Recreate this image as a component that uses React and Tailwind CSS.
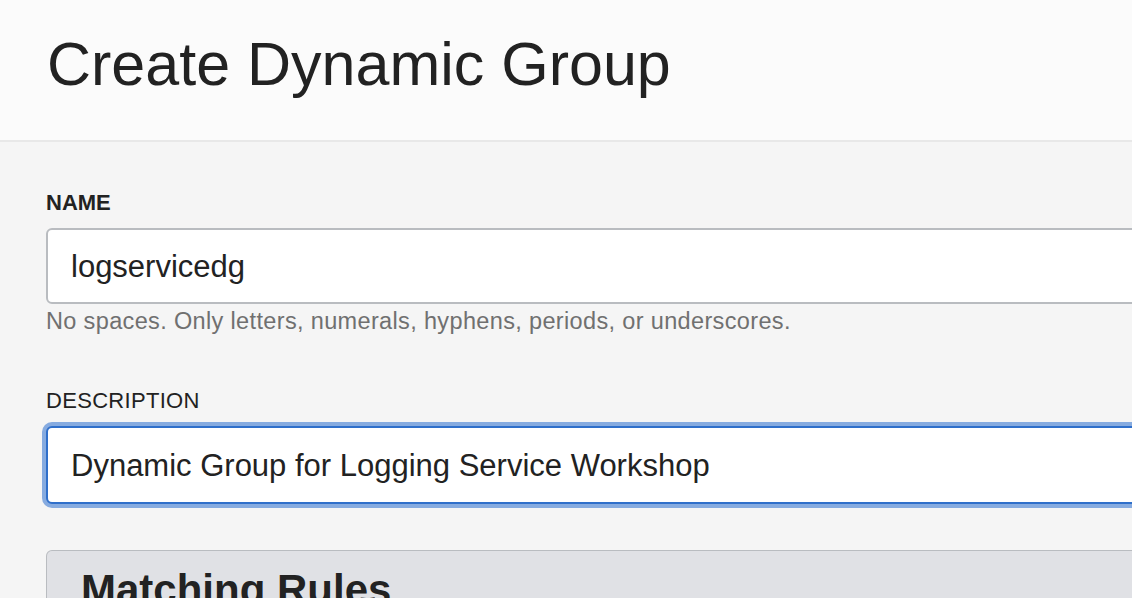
export default function App() {
  return (
    <div className="h-[598px] w-full overflow-hidden bg-[#f5f5f5] font-['Liberation_Sans',Arial,sans-serif] text-[#222]">
      <header className="box-border h-[142px] border-b-2 border-[#e8e8e8] bg-[#fbfbfb] pl-[47px] pt-[34px]">
        <h1 className="text-[61px] leading-[61px] font-normal text-[#222] whitespace-nowrap">Create Dynamic Group</h1>
      </header>

      <main className="pl-[46px] pt-[50px]">
        <label className="block text-[22px] leading-[22px] font-bold text-[#222]">NAME</label>
        <div className="mt-[14px] box-border flex h-[76px] w-[1200px] items-center rounded-[6px] border-2 border-[#b9bcc0] bg-white pl-[23px]">
          <span className="text-[31px] leading-none text-[#222]">logservicedg</span>
        </div>
        <p className="mt-[6px] text-[23.5px] leading-[23px] tracking-[0.35px] text-[#707070] whitespace-nowrap">
          No spaces. Only letters, numerals, hyphens, periods, or underscores.
        </p>

        <label className="mt-[57px] block text-[22px] leading-[22px] font-medium tracking-[0.3px] text-[#222]">DESCRIPTION</label>
        <div className="mt-[14px] box-border flex h-[78px] w-[1200px] items-center rounded-[6px] border-2 border-[#2f6fca] bg-white pl-[23px] ring-[4px] ring-[#86abe0]">
          <span className="text-[31px] leading-none text-[#222] whitespace-nowrap">Dynamic Group for Logging Service Workshop</span>
        </div>

        <section className="mt-[46px] box-border w-[1200px] rounded-t-[6px] border border-b-0 border-[#b9bcc0] bg-[#e0e1e5] pl-[34px] pt-[18px] pb-[20px]">
          <h2 className="text-[42px] leading-[42px] font-bold text-[#222]">Matching Rules</h2>
        </section>
      </main>
    </div>
  )
}
